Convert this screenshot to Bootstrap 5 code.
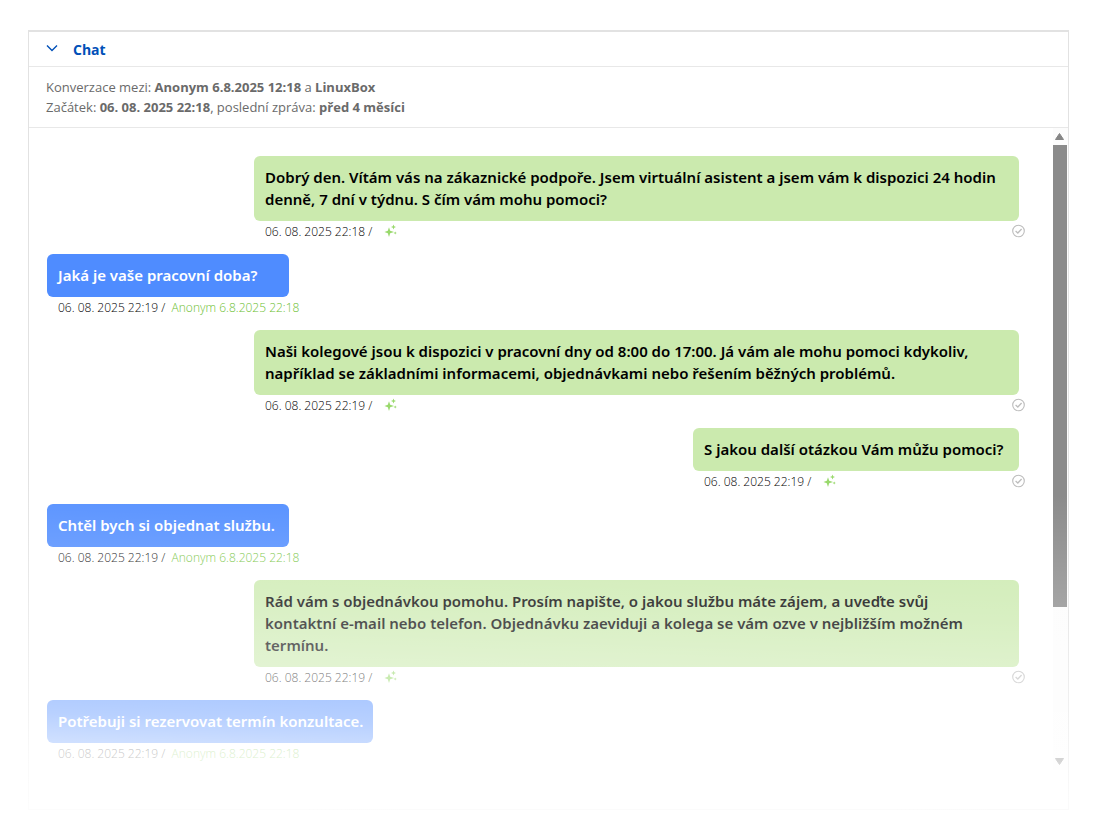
<!DOCTYPE html>
<html lang="cs">
<head>
<meta charset="utf-8">
<meta name="viewport" content="width=device-width, initial-scale=1">
<title>Chat</title>
<link href="https://cdn.jsdelivr.net/npm/bootstrap@5.3.0/dist/css/bootstrap.min.css" rel="stylesheet">
<style>
body { font-family: "Open Sans", "Noto Sans", sans-serif; background: #fff; }
.chat-page { padding: 30px 30px 30px 28px; }
.chat-panel { border: 1px solid #e2e2e2; border-top-width: 2px; }
.chat-fade { inset: -2px -1px -1px; pointer-events: none; z-index: 2;
  background: linear-gradient(182deg, rgba(255,255,255,0) 57%, rgba(255,255,255,.26) 73%, rgba(255,255,255,.6) 88%, rgba(255,255,255,.82) 94%, rgba(255,255,255,.9) 100%); }
.chat-toggle { height: 34px; padding: 0 16px; gap: 14px; font-size: 14px; font-weight: 700; color: #0050b8; background: none; border: 0; }
.chat-info { padding: 10px 17px; font-size: 13px; line-height: 20px; color: #6a6a6a; border-top: 1px solid #e8e8e8; border-bottom: 1px solid #e8e8e8; }
.chat-log { padding: 28px 34px 33px 18px; min-width: 0; }
.msg { max-width: 765px; }
.bubble { min-width: 242px; padding: 10px 10px 11px 11px; border-radius: 6px; font-family: "Noto Sans", "Open Sans", sans-serif; font-size: 15px; line-height: 22px; font-weight: 600; }
.from-bot .bubble { min-width: 326px; background: #cbeaae; color: #000; }
.from-user .bubble { background: #4f8cff; color: #fff; }
.meta { height: 33px; padding-left: 11px; margin-right: -6px; font-size: 12px; line-height: 21px; font-weight: 300; color: #000; white-space: nowrap; }
.from-user .meta { margin-right: -20px; }
.meta a { color: #6cc030; text-decoration: none; }
.meta svg { margin-top: 3px; }
.scroll-track { width: 15px; margin-bottom: 39px; background: #fcfcfc; }
.scroll-track button { height: 17px; border: 0; padding: 0; background: none; line-height: 0; }
.scroll-thumb { width: 14px; height: 76%; background: #8b8b8b; }
</style>
</head>
<body>
<svg class="d-none" aria-hidden="true">
  <symbol id="sparkle" viewBox="0 0 14 14">
    <path fill="#99d96c" d="M5 3.2 6.2 6.8 10 8 6.2 9.2 5 13 3.8 9.2.5 8 3.8 6.8ZM9.5.5l.7 1.8 1.8.7-1.8.7-.7 1.8-.7-1.8L7 3l1.8-.7ZM11.2 7.4l.5 1.1 1.1.5-1.1.5-.5 1.1-.5-1.1L9.6 9l1.1-.5Z"/>
  </symbol>
  <symbol id="seen" viewBox="0 0 14 14">
    <circle cx="7.5" cy="7" r="5.8" fill="none" stroke="#bdbdbd" stroke-width="1.1"/>
    <path d="M4.6 7.1 6.8 9l3.8-4" fill="none" stroke="#bdbdbd" stroke-width="1.3"/>
  </symbol>
</svg>
<main class="chat-page">
  <section class="chat-panel position-relative">
    <button class="chat-toggle d-flex align-items-center w-100 text-start" type="button" aria-expanded="true">
      <svg width="14" height="12" viewBox="0 0 14 12" aria-hidden="true"><path d="M2 2.5 7 7.5 12 2.5" fill="none" stroke="#0050b8" stroke-width="1.4"/></svg>
      <span>Chat</span>
    </button>
    <div class="chat-info">
      <div>Konverzace mezi: <b>Anonym 6.8.2025 12:18</b> a <b>LinuxBox</b></div>
      <div>Začátek: <b>06. 08. 2025 22:18</b>, poslední zpráva: <b>před 4 měsíci</b></div>
    </div>
    <div class="d-flex">
      <div class="chat-log flex-grow-1 d-flex flex-column">
        <article class="msg from-bot align-self-end">
          <div class="bubble">Dobrý den. Vítám vás na zákaznické podpoře. Jsem virtuální asistent a jsem vám k dispozici 24 hodin denně, 7 dní v týdnu. S čím vám mohu pomoci?</div>
          <div class="meta d-flex align-items-start"><span>06. 08. 2025 22:18 /</span><svg class="ms-2 me-auto" width="22" height="14"><use href="#sparkle"/></svg><svg width="14" height="14"><use href="#seen"/></svg></div>
        </article>
        <article class="msg from-user align-self-start">
          <div class="bubble">Jaká je vaše pracovní doba?</div>
          <div class="meta">06. 08. 2025 22:19 /&nbsp; <a href="#">Anonym 6.8.2025 22:18</a></div>
        </article>
        <article class="msg from-bot align-self-end">
          <div class="bubble">Naši kolegové jsou k dispozici v pracovní dny od 8:00 do 17:00. Já vám ale mohu pomoci kdykoliv, například se základními informacemi, objednávkami nebo řešením běžných problémů.</div>
          <div class="meta d-flex align-items-start"><span>06. 08. 2025 22:19 /</span><svg class="ms-2 me-auto" width="22" height="14"><use href="#sparkle"/></svg><svg width="14" height="14"><use href="#seen"/></svg></div>
        </article>
        <article class="msg from-bot align-self-end">
          <div class="bubble">S jakou další otázkou Vám můžu pomoci?</div>
          <div class="meta d-flex align-items-start"><span>06. 08. 2025 22:19 /</span><svg class="ms-2 me-auto" width="22" height="14"><use href="#sparkle"/></svg><svg width="14" height="14"><use href="#seen"/></svg></div>
        </article>
        <article class="msg from-user align-self-start">
          <div class="bubble">Chtěl bych si objednat službu.</div>
          <div class="meta">06. 08. 2025 22:19 /&nbsp; <a href="#">Anonym 6.8.2025 22:18</a></div>
        </article>
        <article class="msg from-bot align-self-end w-100">
          <div class="bubble">Rád vám s objednávkou pomohu. Prosím napište, o jakou službu máte zájem, a uveďte svůj<br>kontaktní e-mail nebo telefon. Objednávku zaeviduji a kolega se vám ozve v nejbližším možném<br>termínu.</div>
          <div class="meta d-flex align-items-start"><span>06. 08. 2025 22:19 /</span><svg class="ms-2 me-auto" width="22" height="14"><use href="#sparkle"/></svg><svg width="14" height="14"><use href="#seen"/></svg></div>
        </article>
        <article class="msg from-user align-self-start">
          <div class="bubble">Potřebuji si rezervovat termín konzultace.</div>
          <div class="meta">06. 08. 2025 22:19 /&nbsp; <a href="#">Anonym 6.8.2025 22:18</a></div>
        </article>
      </div>
      <div class="scroll-track d-flex flex-column flex-shrink-0">
        <button type="button" aria-label="Nahoru"><svg width="15" height="17" viewBox="0 0 15 17"><path d="M6.5 5.5 10.5 11.5H2.5Z" fill="#858585" stroke="#858585" stroke-linejoin="round"/></svg></button>
        <div class="flex-grow-1"><div class="scroll-thumb"></div></div>
        <button type="button" aria-label="Dolů"><svg width="15" height="17" viewBox="0 0 15 17"><path d="M6.5 11.5 10.5 5.5H2.5Z" fill="#858585" stroke="#858585" stroke-linejoin="round"/></svg></button>
      </div>
    </div>
    <div class="chat-fade position-absolute"></div>
  </section>
</main>
<script src="https://cdn.jsdelivr.net/npm/bootstrap@5.3.0/dist/js/bootstrap.bundle.min.js"></script>
</body>
</html>
